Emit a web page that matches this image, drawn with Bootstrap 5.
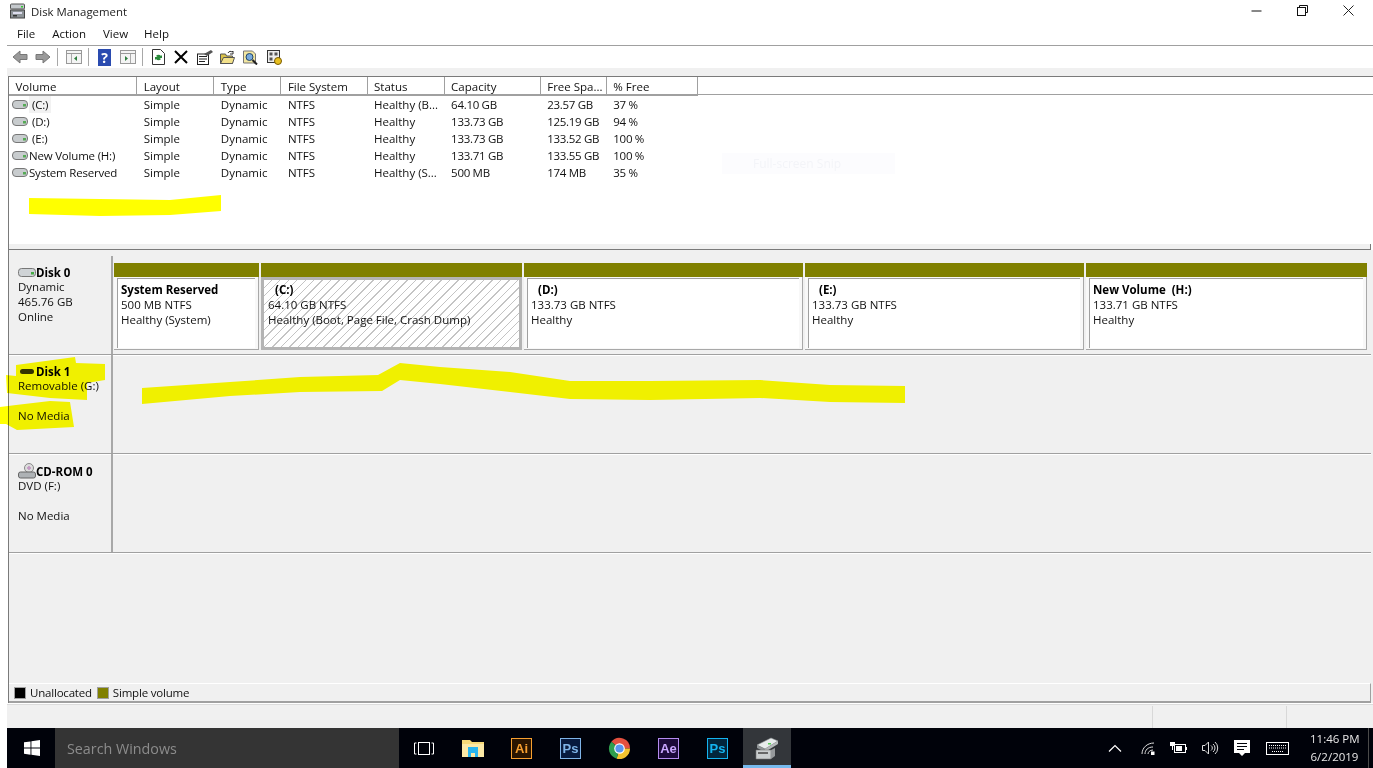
<!DOCTYPE html>
<html lang="en"><head><meta charset="utf-8"><title>Disk Management</title>
<link rel="stylesheet" href="https://cdn.jsdelivr.net/npm/bootstrap@5.3.0/dist/css/bootstrap.min.css">
<style>
html,body{margin:0;height:768px;overflow:hidden;background:#fff}
body{font-family:"Open Sans","Noto Sans",sans-serif;font-size:11.5px;line-height:15px;color:#111;position:relative}
svg{display:block;flex:none}
.win{width:1373px;height:768px;display:flex;flex-direction:column;padding-left:7px}
.titlebar{height:22px;align-items:center;padding-left:2px;gap:4px}
.titlebar .ttl{font-size:11.4px;color:#222}
.winbtns{margin:-2px 2px 0 auto}
.winbtns span{width:46px;display:flex;justify-content:center}
.menubar{height:23px;align-items:center;padding-left:1px}
.menubar span{padding:0 8px 0 9px;font-size:11.5px}
.menubar span:nth-child(3){padding-right:7px}
.toolbar{height:23px;border-top:1px solid #a0a0a0;align-items:center;padding-left:5px}
.toolbar i{display:block;width:1px;height:18px;background:#a8a8a8;margin:0 0 0 6px}
.tg6{margin-left:6px}.tg7{margin-left:7px}.tg8{margin-left:8px}.tg9{margin-left:9px}
.strip{height:8px;background:#f0f0f0}
.listpane{height:168px;margin-left:1px;border:1px solid #7a7a7a;border-bottom:0;border-right:0;background:linear-gradient(#a0a0a0,#a0a0a0) 0 17px/100% 1px no-repeat,#fff}
.vtable{table-layout:fixed;width:689px;margin:0;border-collapse:separate;border-spacing:0;--bs-table-bg:transparent}
.vtable col:nth-child(1){width:128px}.vtable col:nth-child(2){width:77px}.vtable col:nth-child(3){width:67px}.vtable col:nth-child(4){width:86px}.vtable col:nth-child(5){width:77px}.vtable col:nth-child(6){width:96px}.vtable col:nth-child(7){width:66px}.vtable col:nth-child(8){width:91px}
.vtable th,.vtable td{padding:0 0 0 6.5px;font-weight:400;font-size:11.5px;border:0;background:transparent;white-space:nowrap;overflow:hidden;color:#111;box-shadow:none}
.vtable th{height:18px;border-right:1px solid #a0a0a0;border-bottom:1px solid #a0a0a0;line-height:17px;padding-top:1px}
.vtable td{height:17px;line-height:17px}
.vtable td:first-child{padding-left:3px;letter-spacing:-.2px}
.vtable td:nth-child(n+6){letter-spacing:-.3px}
.vname{display:flex;align-items:center;gap:1px}
.vname em{font-style:normal}
.vpad{padding:0 3px}
.vsel{background:#f2f2f2}
.split{height:6px;background:#f0f0f0;border-bottom:1px solid #7a7a7a;margin:0 2px 0 1px;border-left:1px solid #7a7a7a;border-right:1px solid #7a7a7a}
.gpane{height:453px;margin-left:1px;border-left:1px solid #7a7a7a;background:#f0f0f0;display:flex;flex-direction:column;padding:6px 2px 0 0}
.diskrow{height:99px;display:flex;border-bottom:1px solid #a0a0a0;box-shadow:0 1px 0 #fff}
.disklabel{width:104px;flex:none;padding:9px 0 0 9px;border-right:2px solid #a8a8a8}
.disklabel b{display:flex;align-items:center;font-weight:700;color:#000;margin-bottom:-1px}
.disklabel div{height:15px}
.parts{display:flex;flex:1;gap:2px;padding:7px 0 0 1px}
.part{display:flex;flex-direction:column;height:87px}
.pw1{width:145px}.pw2{width:261px}.pw3{width:279px}.pw4{width:281px}
.pbar{height:14px;background:#808000;flex:none}
.pwrap{flex:1;display:flex;padding:1px 3px 1px 3px;background:#f8f8f8;border-right:1px solid #a8a8a8;border-bottom:1px solid #a8a8a8}
.pbody{flex:1;background:#fff;padding:4px 0 0 4px;box-shadow:inset 1px 1px 0 #a0a0a0}
.pbody b{font-weight:700;color:#000;display:block}
.pwrap.sel{padding:0;border:0}
.psel{padding:2px 0 0 4px;border:3px solid #b4b4b4;box-shadow:none;background:repeating-linear-gradient(135deg,#fff 0 5px,#c4c4c4 5px 6px)}
.indent{padding-left:7px}
.filler{flex:1}
.legend{height:20px;background:#f0f0f0;border-top:1px solid #fff;border-bottom:2px solid #a0a0a0;border-right:1px solid #a0a0a0;display:flex;align-items:center;padding-left:5px;gap:4px;letter-spacing:-.2px}
.swatch{width:12px;height:12px;border:1px solid #fff;outline:1px solid #a0a0a0;outline-offset:-1px;flex:none}
.swatch.blk{background:#000}.swatch.olv{background:#808000}
.lt{margin-right:1px}
.status{height:25px;flex:none;background:#f0f0f0;border-top:1px solid #fff;box-shadow:inset 0 1px 0 #dcdcdc;display:flex;justify-content:flex-end}
.status i{display:block;border-left:1px solid #d8d8d8;margin:2px 0 0}
.st1{width:134px}.st2{width:87px}
.taskbar{height:40px;flex:none;background:#00020a;display:flex;align-items:stretch;color:#fff}
.startbtn{width:48px;display:flex;align-items:center;justify-content:center;padding-left:1px}
.searchbox{width:344px;background:#343434;color:#8c8c8c;font-size:14.3px;display:flex;align-items:center;padding-left:12px}
.tbicon{width:49px;display:flex;align-items:center;justify-content:center}
.tbicon.on{background:#33363a;border-bottom:3px solid #76b9ed;width:48px;margin-left:1px;padding-top:2px}
.ai{width:21px;height:21px;display:flex;align-items:center;justify-content:center;font-weight:700;font-size:13px;border:1px solid;font-family:"Liberation Sans",sans-serif}
.ai1{border-color:#f7a030;color:#f7a030;background:#2a1500}
.ai2{border-color:#7fb4e8;color:#7fb4e8;background:#071a3e}
.ai3{border-color:#b58cf0;color:#c9a6ff;background:#1c0a3a}
.ai4{border-color:#14b4f0;color:#14b4f0;background:#02263c}
.tray{margin:0 4px 0 auto;display:flex;align-items:center;padding-right:10px;position:relative}
.tray::after{content:"";position:absolute;right:0;top:0;bottom:0;width:1px;background:#4a4a4a}
.trg15{margin-left:15px}.trg16{margin-left:16px}.trg19{margin-left:19px}
.clock{width:49px;margin-left:21px;text-align:center;font-size:11.5px;line-height:18px;color:#e8e8e8;white-space:nowrap}
.overlay{position:absolute;left:0;top:0;pointer-events:none;mix-blend-mode:multiply}
.ghost{position:absolute;left:722px;top:153px;width:173px;height:21px;background:#fcfcfe;color:#f3f4f8;font-size:12px;line-height:21px;padding-left:31px}
</style></head><body>
<div class="win">
 <div class="d-flex titlebar">
  <svg width="18" height="16" viewBox="0 0 18 16"><rect x="1.500" y="1" width="14" height="5" rx="1" fill="#c4c8cc" stroke="#555"/><rect x="12" y="3" width="2" height="1.500" fill="#3c3"/><rect x="1.500" y="7" width="14" height="8" fill="#8d9397" stroke="#444"/><rect x="4" y="9" width="9" height="2" fill="#dde"/><rect x="4" y="12" width="4" height="1.500" fill="#333"/></svg>
  <span class="ttl">Disk Management</span>
  <div class="d-flex winbtns">
   <span><svg width="11" height="11" viewBox="0 0 11 11"><path d="M.5 6h10" stroke="#111"/></svg></span>
   <span><svg width="11" height="11" viewBox="0 0 11 11" fill="none" stroke="#111"><path d="M2.500 2.500V.5h8v7H8"/><rect x=".5" y="2.500" width="8" height="8" fill="#fff"/></svg></span>
   <span><svg width="11" height="11" viewBox="0 0 11 11"><path d="M.5.5l10 10M10.500.5l-10 10" stroke="#222"/></svg></span>
  </div>
 </div>
 <div class="d-flex menubar"><span>File</span><span>Action</span><span>View</span><span>Help</span></div>
 <div class="d-flex toolbar">
  <svg width="16" height="14" viewBox="0 0 16 14"><path d="M8 1L1 7l7 6V9.500h7v-5H8z" fill="#9a9a9a" stroke="#777"/></svg>
  <svg class="tg7" width="16" height="14" viewBox="0 0 16 14"><path d="M8 1l7 6-7 6V9.500H1v-5h7z" fill="#9a9a9a" stroke="#777"/></svg>
  <i></i>
  <svg class="tg8" width="16" height="14" viewBox="0 0 16 14"><rect x=".5" y=".5" width="15" height="13" fill="#f4f4f4" stroke="#999"/><path d="M1 3.500h14" stroke="#999"/><path d="M5.500 4v9" stroke="#aaa"/><path d="M11 6v5L8 8.500z" fill="#2f7f3f"/></svg>
  <i></i>
  <svg class="tg9" width="13" height="17" viewBox="0 0 13 17"><rect width="13" height="17" fill="#2a4bb0"/><text x="6.500" y="14" font-size="14" fill="#fff" text-anchor="middle" font-weight="700">?</text></svg>
  <svg class="tg9" width="16" height="14" viewBox="0 0 16 14"><rect x=".5" y=".5" width="15" height="13" fill="#f4f4f4" stroke="#999"/><path d="M1 3.500h14" stroke="#999"/><path d="M10.500 4v9" stroke="#aaa"/><path d="M5 6v5l3-2.500z" fill="#2f7f3f"/></svg>
  <i></i>
  <svg class="tg9" width="13" height="16" viewBox="0 0 13 16"><path d="M.5.5h8l4 4v11H.5z" fill="#fff" stroke="#333"/><path d="M4 7a3 3 0 0 1 5 0l1-1v3H7zM9 10a3 3 0 0 1-5 0l-1 1V8h3z" fill="#2a8a3a"/></svg>
  <svg class="tg9" width="14" height="14" viewBox="0 0 14 14"><path d="M1 1l12 12M13 1L1 13" stroke="#000" stroke-width="2"/></svg>
  <svg class="tg9" width="16" height="15" viewBox="0 0 16 15"><rect x=".5" y="4" width="11" height="10.500" fill="#fff" stroke="#222"/><path d="M2 6.500h8M2 9h8M2 11.500h6" stroke="#222"/><path d="M7 4l7-4 2 2-6 4z" fill="#555"/></svg>
  <svg class="tg7" width="15" height="14" viewBox="0 0 15 14"><path d="M.5 4h5l1 2h6v7.500H.5z" fill="#d9c24a" stroke="#555"/><path d="M.5 13.500l3-6h11l-2 6z" fill="#f2e08a" stroke="#555"/><path d="M8 3c1-2 3-2 4-1l1-1v3h-3" fill="none" stroke="#333"/></svg>
  <svg class="tg8" width="15" height="15" viewBox="0 0 15 15"><path d="M.5 1h9l3 3v9H.5z" fill="#f2e6a0" stroke="#777"/><circle cx="6.500" cy="7" r="3.500" fill="#7ad" stroke="#246"/><path d="M9.500 10l4.500 4.500" stroke="#222" stroke-width="2"/></svg>
  <svg class="tg9" width="15" height="15" viewBox="0 0 15 15"><rect x=".5" y=".5" width="12" height="12" fill="#eee" stroke="#333"/><path d="M2.500 2.500h3v3h-3zM7.500 2.500h3v3h-3zM2.500 7.500h3v3h-3z" fill="#555"/><circle cx="11" cy="11" r="3.500" fill="#e8c020" stroke="#7a5a00"/></svg>
 </div>
 <div class="strip"></div>
 <div class="listpane">
  <table class="table vtable">
   <colgroup><col><col><col><col><col><col><col><col></colgroup>
   <thead><tr><th>Volume</th><th>Layout</th><th>Type</th><th>File System</th><th>Status</th><th>Capacity</th><th>Free Spa...</th><th>% Free</th></tr></thead>
   <tbody id="vb"></tbody>
  </table>
 </div>
 <div class="split"></div>
 <div class="gpane">
  <div class="diskrow">
   <div class="disklabel"><b><svg width="18" height="11" viewBox="0 0 18 11"><rect x=".5" y="1.500" width="17" height="8" rx="3" fill="#cfd3d6" stroke="#777"/><rect x="13" y="5" width="3" height="2.500" fill="#4a4"/></svg>Disk 0</b><div>Dynamic</div><div>465.76 GB</div><div>Online</div></div>
   <div class="parts">
    <div class="part pw1"><div class="pbar"></div><div class="pwrap"><div class="pbody"><b>System Reserved</b>500 MB NTFS<br>Healthy (System)</div></div></div>
    <div class="part pw2"><div class="pbar"></div><div class="pwrap sel"><div class="pbody psel"><b class="indent">(C:)</b>64.10 GB NTFS<br>Healthy (Boot, Page File, Crash Dump)</div></div></div>
    <div class="part pw3"><div class="pbar"></div><div class="pwrap"><div class="pbody"><b class="indent">(D:)</b>133.73 GB NTFS<br>Healthy</div></div></div>
    <div class="part pw3"><div class="pbar"></div><div class="pwrap"><div class="pbody"><b class="indent">(E:)</b>133.73 GB NTFS<br>Healthy</div></div></div>
    <div class="part pw4"><div class="pbar"></div><div class="pwrap"><div class="pbody"><b>New Volume &nbsp;(H:)</b>133.71 GB NTFS<br>Healthy</div></div></div>
   </div>
  </div>
  <div class="diskrow">
   <div class="disklabel"><b><svg width="18" height="10" viewBox="0 0 18 10"><rect x="2" y="2" width="14" height="5" rx="2.500" fill="#333"/></svg>Disk 1</b><div>Removable (G:)</div><div></div><div>No Media</div></div>
  </div>
  <div class="diskrow">
   <div class="disklabel"><b><svg width="18" height="16" viewBox="0 0 18 16"><circle cx="11" cy="5" r="4.500" fill="#ddd" stroke="#888"/><circle cx="11" cy="5" r="1.200" fill="#fff" stroke="#a6a"/><rect x=".5" y="9" width="17" height="6" rx="2" fill="#aeb2b5" stroke="#666"/></svg>CD-ROM 0</b><div>DVD (F:)</div><div></div><div>No Media</div></div>
  </div>
  <div class="filler"></div>
  <div class="legend"><span class="swatch blk"></span><span class="lt">Unallocated</span><span class="swatch olv"></span><span>Simple volume</span></div>
 </div>
 <div class="status"><i class="st1"></i><i class="st2"></i></div>
 <div class="taskbar">
  <div class="startbtn"><svg width="16" height="16" viewBox="0 0 16 16" fill="#fff"><path d="M0 2.300l6.500-.9v6.200H0zM7.400 1.300L16 0v7.600H7.400zM0 8.400h6.500v6.300L0 13.800zM7.400 8.400H16V16l-8.600-1.200z"/></svg></div>
  <div class="searchbox">Search Windows</div>
  <div class="tbicon"><svg width="20" height="13" viewBox="0 0 20 13" fill="none" stroke="#fff"><rect x="4.500" y=".5" width="11" height="12"/><path d="M2.500 1H.5v11h2M17.500 1h2v11h-2"/></svg></div>
  <div class="tbicon"><svg width="22" height="19" viewBox="0 0 22 19"><path d="M0 1h8l2 2h12v15H0z" fill="#f6d978"/><path d="M0 5h22v13H0z" fill="#fce9a6"/><path d="M6 8h10v10h-3v-4H9v4H6z" fill="#29b6f0"/></svg></div>
  <div class="tbicon"><span class="ai ai1">Ai</span></div>
  <div class="tbicon"><span class="ai ai2">Ps</span></div>
  <div class="tbicon"><svg width="23" height="23" viewBox="0 0 24 24"><path d="M12 12L3.500 5A11 11 0 0 1 23 12z" fill="#e3503f"/><path d="M12 12H23A11 11 0 0 1 9 22.600z" fill="#f4c430"/><path d="M12 12L9 22.600A11 11 0 0 1 3.500 5z" fill="#2f9e4f"/><circle cx="12" cy="12" r="5.500" fill="#fff"/><circle cx="12" cy="12" r="4.300" fill="#5a95ee"/></svg></div>
  <div class="tbicon"><span class="ai ai3">Ae</span></div>
  <div class="tbicon"><span class="ai ai4">Ps</span></div>
  <div class="tbicon on"><svg width="24" height="24" viewBox="0 0 24 24"><path d="M2 9l14-7 7 3-13 8z" fill="#e8ecec" stroke="#8a8f90" stroke-width=".6"/><path d="M2 9v3l8 4v-3z" fill="#8f9496"/><path d="M10 13v3l13-8V5z" fill="#b5b9ba"/><rect x="13" y="7" width="3" height="1.500" fill="#5c5"/><path d="M1 14h15v9H1z" fill="#c9cdce" stroke="#777" stroke-width=".6"/><path d="M3 16h10v2H3z" fill="#666"/><path d="M16 14l4-2v8l-4 3z" fill="#96999b"/></svg></div>
  <div class="tray">
   <svg width="14" height="8" viewBox="0 0 14 8" fill="none" stroke="#fff" stroke-width="1.200"><path d="M1 7.500L7 1.500l6 6"/></svg>
   <svg class="trg19" width="14" height="13" viewBox="0 0 14 13" fill="none" stroke="#ddd"><path d="M1 12C1 6 6 1 13 1M4 12c0-4 3-7 8-7M7 12c0-2 2-4 5-4"/><rect x="10" y="9.500" width="3.500" height="3.500" fill="#fff" stroke="none"/></svg>
   <svg class="trg15" width="17" height="12" viewBox="0 0 17 12"><rect x="4.500" y="2.500" width="11" height="8" fill="none" stroke="#fff"/><rect x="6" y="4" width="6" height="5" fill="#fff"/><rect x="15.500" y="5" width="1.500" height="3" fill="#fff"/><path d="M0 0h5v4H0zM2 4h1v4H2z" fill="#fff"/></svg>
   <svg class="trg15" width="17" height="14" viewBox="0 0 17 14" fill="none" stroke="#ddd"><path d="M.5 4.500h2.500l3.500-3.500v12l-3.500-3.500H.5zM9 4.500a3 3 0 0 1 0 5M11 3a5 5 0 0 1 0 8M13 1a8 8 0 0 1 0 12"/></svg>
   <svg class="trg15" width="16" height="16" viewBox="0 0 16 16"><path d="M0 0h16v13h-5l-3 3-3-3H0z" fill="#fff"/><path d="M3 3.500h10M3 6.500h10M3 9.500h7" stroke="#00020a"/></svg>
   <svg class="trg16" width="23" height="13" viewBox="0 0 23 13" fill="none" stroke="#fff"><rect x=".5" y=".5" width="22" height="12"/><path d="M3 3.500h17M3 6h17M6 9.500h11" stroke-dasharray="1 1"/></svg>
   <span class="clock">11:46 PM<br>6/2/2019</span>
  </div>
 </div>
</div>
<div class="ghost">Full-screen Snip</div>
<svg class="overlay" width="1373" height="768" viewBox="0 0 1373 768">
 <g fill="#ffff00">
  <path d="M29 198L100 199 170 200 221 195 221 211 170 215 100 216 29 214z"/>
  <path d="M142 388L230 382 300 377 378 375 400 363 440 367 510 372 570 381 650 381 760 380 830 385 905 386 905 403 830 402 760 398 650 400 570 399 510 392 440 384 400 380 382 391 300 392 230 396 142 404z"/>
  <path d="M16 365L75 357 76 363 105 364 105 380 87 383 87 400 50 398 7 393 6 375 16 376z"/>
  <path d="M0 407L16 405 50 401 70 402 74 427 17 430 6 424 0 424z"/>
 </g>
</svg>
<script>
var d=[["(C:)","Healthy (B...","64.10 GB","23.57 GB","37 %"],["(D:)","Healthy","133.73 GB","125.19 GB","94 %"],["(E:)","Healthy","133.73 GB","133.52 GB","100 %"],["New Volume (H:)","Healthy","133.71 GB","133.55 GB","100 %"],["System Reserved","Healthy (S...","500 MB","174 MB","35 %"]];
var ic='<svg width="16" height="9" viewBox="0 0 16 9"><rect x=".5" y=".5" width="15" height="8" rx="3.500" fill="#c8ccce" stroke="#777"/><rect x="11" y="4" width="3" height="2.500" fill="#5a5"/></svg>';
document.getElementById('vb').innerHTML=d.map(function(r,i){
 var n=r[0][0]=='('?'<em class="vpad'+(i==0?' vsel':'')+'">'+r[0]+'</em>':'<em>'+r[0]+'</em>';
 return '<tr><td><div class="vname">'+ic+n+'</div></td><td>Simple</td><td>Dynamic</td><td>NTFS</td><td>'+r[1]+'</td><td>'+r[2]+'</td><td>'+r[3]+'</td><td>'+r[4]+'</td></tr>';
}).join('');
</script>
</body></html>
